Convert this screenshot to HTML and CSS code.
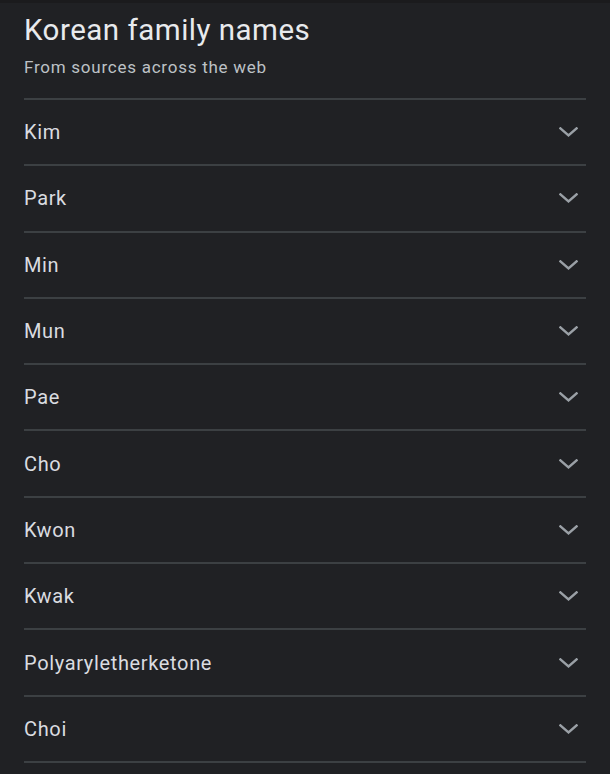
FILE: index.html
```html
<!DOCTYPE html>
<html>
<head>
<meta charset="utf-8">
<link rel="stylesheet" href="styles.css">
</head>
<body>
<div class="card">
  <div class="header">
    <h1 class="title">Korean family names</h1>
    <div class="subtitle">From sources across the web</div>
  </div>
  <ul class="list">
    <li class="row"><span class="name">Kim</span><svg class="chev" viewBox="0 0 20 10" width="19" height="10"><polyline points="1.5,1.2 10,8.5 18.5,1.2"/></svg></li>
    <li class="row"><span class="name">Park</span><svg class="chev" viewBox="0 0 20 10" width="19" height="10"><polyline points="1.5,1.2 10,8.5 18.5,1.2"/></svg></li>
    <li class="row"><span class="name">Min</span><svg class="chev" viewBox="0 0 20 10" width="19" height="10"><polyline points="1.5,1.2 10,8.5 18.5,1.2"/></svg></li>
    <li class="row"><span class="name">Mun</span><svg class="chev" viewBox="0 0 20 10" width="19" height="10"><polyline points="1.5,1.2 10,8.5 18.5,1.2"/></svg></li>
    <li class="row"><span class="name">Pae</span><svg class="chev" viewBox="0 0 20 10" width="19" height="10"><polyline points="1.5,1.2 10,8.5 18.5,1.2"/></svg></li>
    <li class="row"><span class="name">Cho</span><svg class="chev" viewBox="0 0 20 10" width="19" height="10"><polyline points="1.5,1.2 10,8.5 18.5,1.2"/></svg></li>
    <li class="row"><span class="name">Kwon</span><svg class="chev" viewBox="0 0 20 10" width="19" height="10"><polyline points="1.5,1.2 10,8.5 18.5,1.2"/></svg></li>
    <li class="row"><span class="name">Kwak</span><svg class="chev" viewBox="0 0 20 10" width="19" height="10"><polyline points="1.5,1.2 10,8.5 18.5,1.2"/></svg></li>
    <li class="row"><span class="name">Polyaryletherketone</span><svg class="chev" viewBox="0 0 20 10" width="19" height="10"><polyline points="1.5,1.2 10,8.5 18.5,1.2"/></svg></li>
    <li class="row"><span class="name">Choi</span><svg class="chev" viewBox="0 0 20 10" width="19" height="10"><polyline points="1.5,1.2 10,8.5 18.5,1.2"/></svg></li>
  </ul>
</div>
</body>
</html>
```
FILE: styles.css
```css
html, body {
  margin: 0;
  padding: 0;
  background: #202124;
}
body {
  font-family: Roboto, "Liberation Sans", Arial, sans-serif;
  border-top: 3px solid #1b1b1d;
}
.card {
  padding: 0 24px;
}
.header {
  padding-top: 8px;
  height: 97px;
  box-sizing: border-box;
  border-bottom: 2px solid #3c4043;
}
.title {
  margin: 0;
  font-size: 29.5px;
  font-weight: 400;
  letter-spacing: 0.5px;
  line-height: 38px;
  color: #e8eaed;
}
.subtitle {
  margin-top: 7px;
  font-size: 17px;
  letter-spacing: 0.75px;
  line-height: 22px;
  color: #bdc1c6;
}
.list {
  list-style: none;
  margin: 0;
  padding: 0;
}
.row {
  display: flex;
  align-items: center;
  justify-content: space-between;
  height: 66.3px;
  box-sizing: border-box;
  border-bottom: 2px solid #3c4043;
}
.name {
  font-size: 20px;
  letter-spacing: 0.65px;
  color: #dadce0;
}
.chev {
  margin-right: 8px;
  fill: none;
  stroke: #9aa0a6;
  stroke-width: 2.6;
  stroke-linecap: square;
}
```
